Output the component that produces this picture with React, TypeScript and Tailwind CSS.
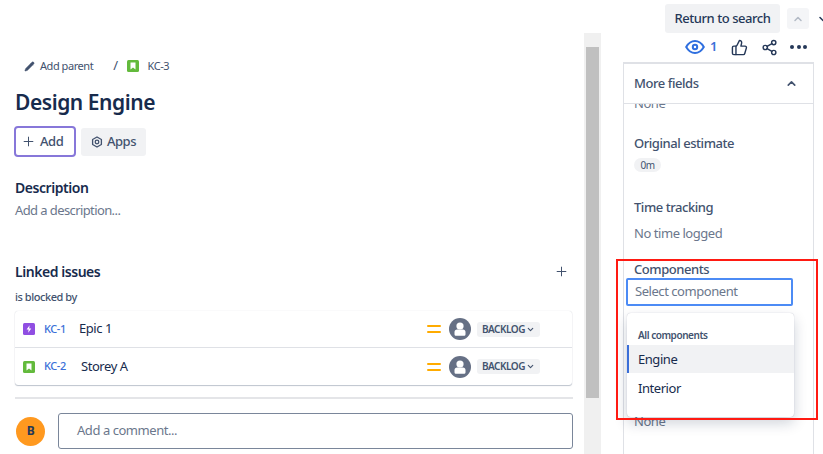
import { ChevronDown, ChevronUp, Pencil, Plus, Share2, ThumbsUp } from 'lucide-react';

const links = [
  { key: 'KC-1', title: 'Epic 1', type: 'epic' },
  { key: 'KC-2', title: 'Storey A', type: 'story' },
];

function StoryIcon({ size = 12 }: { size?: number }) {
  return (
    <svg width={size} height={size} viewBox="0 0 12 12" className="shrink-0">
      <rect width="12" height="12" rx="1.5" fill="#63ba3c" />
      <path d="M3.5 2.5h5v7L6 7.6 3.5 9.5z" fill="#fff" />
    </svg>
  );
}

function EpicIcon() {
  return (
    <svg width="12" height="12" viewBox="0 0 12 12" className="shrink-0">
      <rect width="12" height="12" rx="1.5" fill="#904ee2" />
      <path d="M6.6 2.3 3.6 6.5h2l-.4 3.2 3.1-4.3H6.2z" fill="#fff" />
    </svg>
  );
}

function Priority() {
  return (
    <div className="flex w-[14px] flex-col gap-[4px]">
      <div className="h-[2px] rounded-full bg-[#ffab00]" />
      <div className="h-[2px] rounded-full bg-[#ffab00]" />
    </div>
  );
}

function AvatarIcon() {
  return (
    <svg width="22" height="22" viewBox="0 0 22 22" className="shrink-0">
      <circle cx="11" cy="11" r="11" fill="#667085" />
      <circle cx="11" cy="8" r="3.6" fill="#fff" />
      <path d="M5.500 14c0-1.600 1-2.600 2.600-2.600h5.800c1.600 0 2.600 1 2.600 2.600v2.200c0 1-.8 1.600-1.600 1.600H7.100c-.8 0-1.600-.6-1.600-1.600z" fill="#fff" />
    </svg>
  );
}

function LeftColumn() {
  return (
    <div className="w-[584px] shrink-0 pl-[15px] pr-[11px]">
      <div className="mt-[56px] flex h-[20px] items-center pl-[9px] text-[11px] text-[#42526e]">
        <Pencil size={11} fill="#42526e" strokeWidth={1} />
        <span className="ml-[5px]">Add parent</span>
        <span className="ml-[20px] text-[13px]">/</span>
        <span className="ml-[9px]"><StoryIcon /></span>
        <span className="ml-[9px]">KC-3</span>
      </div>
      <h1 className="mt-[9px] text-[21px] leading-[34px] font-semibold text-[#172b4d]">Design Engine</h1>
      <div className="mt-[7px] -ml-px flex items-center gap-[5px]">
        <div className="flex h-[31px] w-[62px] items-center gap-[4px] rounded-[4px] border-2 border-[#8777d9] pl-[5px] text-[13px] font-medium text-[#42526e]">
          <Plus size={15} strokeWidth={1.6} />
          Add
        </div>
        <div className="flex h-[28px] w-[65px] items-center justify-center gap-[4px] rounded-[3px] bg-[#f1f2f4] text-[13px] font-medium text-[#42526e]">
          <svg width="12" height="12" viewBox="0 0 12 12" fill="none" stroke="#42526e" className="shrink-0">
            <path d="M6 1 10.400 3.500v5L6 11 1.600 8.500v-5z" strokeWidth="1.3" strokeLinejoin="round" />
            <circle cx="6" cy="6" r="1.800" strokeWidth="1.3" />
          </svg>
          Apps
        </div>
      </div>
      <h2 className="mt-[21px] text-[14px] leading-[20px] font-semibold text-[#172b4d]">Description</h2>
      <p className="mt-[2px] text-[13px] leading-[20px] tracking-[-0.6px] text-[#6b778c]">Add a description...</p>
      <div className="mt-[41px] flex h-[20px] items-center justify-between pr-[4px]">
        <h2 className="text-[14px] font-semibold text-[#172b4d]">Linked issues</h2>
        <Plus size={15} strokeWidth={1.6} className="text-[#42526e]" />
      </div>
      <p className="mt-[8px] text-[11px] leading-[16px] font-medium text-[#42526e]">is blocked by</p>
      <div className="mt-[6px] w-[557px] rounded-[3px] bg-white shadow-[0_1px_1px_rgba(9,30,66,0.25),0_0_1px_rgba(9,30,66,0.2)]">
        {links.map((link, i) => (
          <div
            key={link.key}
            className={`flex h-[37px] items-center pl-[8px] pr-[32px] ${i === 0 ? 'border-b border-[#dfe1e6]' : ''}`}
          >
            {link.type === 'epic' ? <EpicIcon /> : <StoryIcon />}
            <span className="ml-[9px] w-[23px] text-[11px] font-medium text-[#3b6fd8]">{link.key}</span>
            <span className={`text-[13px] text-[#172b4d] ${i === 0 ? 'ml-[12px]' : 'ml-[14px]'}`}>{link.title}</span>
            <div className="ml-auto"><Priority /></div>
            <div className="ml-[8px]"><AvatarIcon /></div>
            <div className="ml-[6px] flex h-[15px] w-[63px] items-center justify-center gap-px rounded-[3px] bg-[#f1f2f4] text-[10px] font-semibold text-[#42526e]">
              BACKLOG
              <ChevronDown size={9} strokeWidth={3} />
            </div>
          </div>
        ))}
      </div>
      <div className="mt-[12px] h-[2px] w-[558px] bg-[#e4e5e8]" />
      <div className="mt-[14px] flex items-center">
        <div className="ml-px flex h-[29px] w-[29px] items-center justify-center rounded-full bg-[#ff991f] text-[12px] font-bold text-[#253858]">B</div>
        <div className="ml-[13px] flex h-[36px] w-[515px] items-center rounded-[3px] border border-[#7a869a] pl-[18px] text-[13px] text-[#6b778c]">
          Add a comment...
        </div>
      </div>
    </div>
  );
}

function Scrollbar() {
  return (
    <div className="mt-[33px] h-[421px] w-[17px] shrink-0 bg-[#f0f0f0] px-[2px] pt-[14px]">
      <div className="h-[351px] bg-[#c0c0c0]" />
    </div>
  );
}

function RightColumn() {
  return (
    <div className="min-w-0 flex-1">
      <div className="mt-[4px] flex h-[29px] items-center">
        <div className="ml-[64px] flex h-[29px] w-[115px] shrink-0 items-center justify-center rounded-[3px] bg-[#f1f2f4] text-[13px] font-medium text-[#253858]">
          Return to search
        </div>
        <div className="ml-[7px] flex h-[21px] w-[22px] shrink-0 items-center justify-center rounded-[3px] bg-[#f4f5f7]">
          <ChevronUp size={12} strokeWidth={3} className="text-[#b3bac5]" />
        </div>
        <ChevronDown size={12} strokeWidth={3} className="ml-[8px] shrink-0 text-[#253858]" />
      </div>
      <div className="mt-[3px] flex h-[22px] items-center pl-[84px]">
        <svg width="20" height="16" viewBox="0 0 20 16" fill="none" stroke="#2f6fdf" strokeWidth="2">
          <path d="M1.200 8C3.500 4 6.500 2 10 2s6.500 2 8.800 6c-2.300 4-5.300 6-8.800 6S3.500 12 1.200 8z" />
          <circle cx="10" cy="8" r="2.200" />
        </svg>
        <span className="ml-[5px] text-[13px] font-semibold text-[#3b6fd8]">1</span>
        <ThumbsUp size={17} strokeWidth={2} className="ml-[14px] text-[#253858]" />
        <Share2 size={17} strokeWidth={2} className="ml-[13px] text-[#253858]" />
        <div className="ml-[12px] flex gap-[2.5px]">
          <span className="h-[4px] w-[4px] rounded-full bg-[#253858]" />
          <span className="h-[4px] w-[4px] rounded-full bg-[#253858]" />
          <span className="h-[4px] w-[4px] rounded-full bg-[#253858]" />
        </div>
      </div>
      <div className="relative mt-[4px] ml-[22px] h-[392px] w-[191px] border-x border-t-2 border-[#dfe1e6]">
        <div className="flex h-[40px] items-center justify-between border-b border-[#dfe1e6] pl-[10px] pr-[15px] text-[13px] font-medium text-[#42526e]">
          More fields
          <ChevronUp size={13} strokeWidth={3} />
        </div>
        <div className="h-[350px] overflow-hidden pl-[10px]">
          <p className="-mt-[10px] text-[13px] leading-[18px] text-[#6b778c]">None</p>
          <p className="mt-[22px] text-[13px] leading-[18px] font-medium text-[#42526e]">Original estimate</p>
          <div className="mt-[6px] flex h-[14px] w-[27px] items-center justify-center rounded-full bg-[#f1f2f4] text-[10px] text-[#42526e]">0m</div>
          <p className="mt-[26px] text-[13px] leading-[18px] font-medium text-[#42526e]">Time tracking</p>
          <p className="mt-[8px] text-[13px] leading-[18px] text-[#6b778c]">No time logged</p>
          <p className="mt-[18px] text-[13px] leading-[18px] font-medium text-[#42526e]">Components</p>
          <div className="-ml-[8px] flex h-[28px] w-[167px] items-center rounded-[2px] border-2 border-[#4c8bf5] pl-[7px] text-[13px] text-[#6b778c]">
            Select component
          </div>
          <p className="mt-[106px] text-[13px] leading-[18px] text-[#6b778c]">None</p>
        </div>
        {/* dropdown sits over the field below it */}
        <div className="absolute left-[3px] top-[249px] h-[104px] w-[167px] rounded-[4px] bg-white shadow-[0_6px_14px_rgba(9,30,66,0.2),0_0_1px_rgba(9,30,66,0.3)]">
          <p className="pl-[11px] pt-[14px] text-[10px] leading-[16px] font-semibold text-[#42526e]">All components</p>
          <div className="mt-[2px] flex h-[28px] items-center border-l-2 border-[#3b6fd8] bg-[#f1f2f4] pl-[9px] pt-[2px] text-[13px] text-[#172b4d]">Engine</div>
          <div className="mt-px flex h-[28px] items-center pl-[11px] pt-[2px] text-[13px] text-[#172b4d]">Interior</div>
        </div>
      </div>
    </div>
  );
}

export default function App() {
  return (
    <div className="relative flex h-[454px] w-[823px] overflow-hidden bg-white font-['Noto_Sans',sans-serif] tracking-[-0.45px]">
      <LeftColumn />
      <Scrollbar />
      <RightColumn />
      {/* red annotation box drawn on top of the screenshot */}
      <div className="absolute left-[616px] top-[259px] h-[161px] w-[202px] border-2 border-[#ff1a12]" />
    </div>
  );
}
